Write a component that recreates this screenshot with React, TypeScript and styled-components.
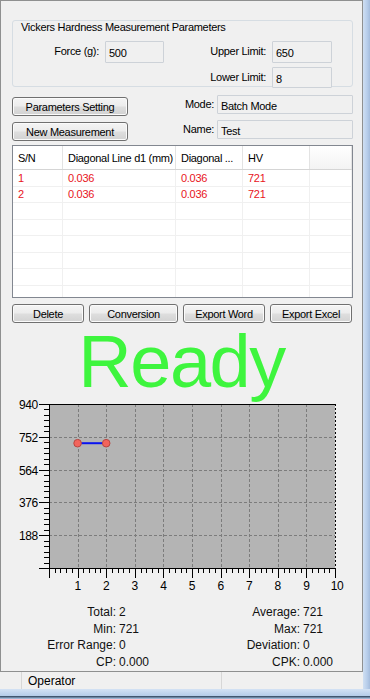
import React from "react";
import styled, { createGlobalStyle } from "styled-components";

const GlobalStyle = createGlobalStyle`
  html, body { margin: 0; padding: 0; }
  body {
    font-family: "Liberation Sans", Arial, sans-serif;
    font-size: 11px;
    color: #000;
    background: #f0f0f0;
  }
  #root { width: 370px; height: 699px; }
`;

const Screen = styled.div`
  width: 370px;
  height: 699px;
  display: flex;
  flex-direction: column;
  overflow: hidden;
  background: #f0f0f0;
`;
const Body = styled.div`
  display: flex;
  flex: 1;
  min-height: 0;
`;
const WindowArea = styled.div`
  width: 363px;
  display: flex;
  flex-direction: column;
`;
const SideFrame = styled.div`
  flex: 1;
  background: linear-gradient(90deg, #cfdff2, #b7cdea 60%, #a4bcdc);
`;
const BottomFrame = styled.div`
  height: 10px;
  background: linear-gradient(#d3e2f4 0%, #b6cde9 65%, #40566f 70%, #40566f 82%, #9db5d3 88%);
`;
const Panel = styled.div`
  flex: 1;
  border: 1px solid #8f9090;
  padding: 0 9px 0 11px;
  display: flex;
  flex-direction: column;
  letter-spacing: -0.3px;
`;

/* parameters group */
const GroupBox = styled.div`
  margin-top: 19px;
  height: 65px;
  border: 1px solid #d6dde3;
  border-radius: 3px;
`;
const GroupTitle = styled.div`
  display: inline-block;
  margin: -8px 0 0 6px;
  padding: 0 2px;
  line-height: 13px;
  background: #f0f0f0;
`;
const FieldGrid = styled.div`
  display: grid;
  grid-template-columns: 86px 59px 96px 60px;
  grid-template-rows: 22px 21px;
  column-gap: 6px;
  row-gap: 4px;
  margin-top: 7px;
`;
const Label = styled.div<{ $col?: number; $row?: number }>`
  grid-column: ${({ $col }) => $col ?? "auto"};
  grid-row: ${({ $row }) => $row ?? "auto"};
  text-align: right;
  align-self: center;
  padding-bottom: 2px;
`;
const TextBox = styled.div<{ $col?: number; $row?: number }>`
  grid-column: ${({ $col }) => $col ?? "auto"};
  grid-row: ${({ $row }) => $row ?? "auto"};
  border: 1px solid #cdd2d8;
  border-radius: 1px;
  background: #f0f0f0;
  display: flex;
  align-items: center;
  padding: 2px 0 0 3px;
  box-sizing: border-box;
`;

/* buttons + mode */
const ControlRow = styled.div`
  display: flex;
  margin-top: 8px;
  height: 46px;
`;
const ButtonColumn = styled.div`
  width: 116px;
  display: flex;
  flex-direction: column;
  gap: 6px;
  padding-top: 2px;
`;
const InfoGrid = styled.div`
  flex: 1;
  display: grid;
  grid-template-columns: 1fr 136px;
  grid-template-rows: 19px 19px;
  column-gap: 3px;
  row-gap: 6px;
`;
const Button = styled.button`
  height: 19px;
  padding: 0;
  border: 1px solid #707070;
  border-radius: 3px;
  background: linear-gradient(#f4f4f4 0%, #ececec 48%, #dedede 52%, #d2d2d2 100%);
  box-shadow: inset 0 0 0 1px #fbfbfb;
  font-family: "Liberation Sans", Arial, sans-serif;
  font-size: 11px;
  letter-spacing: -0.3px;
  color: #000;
`;

/* table */
const Table = styled.div`
  margin-top: 4px;
  height: 153px;
  box-sizing: border-box;
  border: 1px solid #828790;
  background: #fff;
  overflow: hidden;
`;
const TableRow = styled.div<{ $header?: boolean }>`
  display: grid;
  grid-template-columns: 50px 113px 67px 67px 1fr;
  height: ${({ $header }) => ($header ? "24px" : "16.5px")};
  border-bottom: 1px solid ${({ $header }) => ($header ? "#d5d5d5" : "#f0f0f0")};
  box-sizing: border-box;
  color: ${({ $header }) => ($header ? "#000" : "#e8141c")};
`;
const Cell = styled.div<{ $header?: boolean; $blank?: boolean }>`
  display: flex;
  align-items: center;
  padding-left: 5px;
  border-right: 1px solid ${({ $header }) => ($header ? "#e3e3e3" : "#f0f0f0")};
  background: ${({ $header, $blank }) =>
    $header && $blank ? "linear-gradient(#fff, #f3f3f3)" : "transparent"};
  white-space: nowrap;
  overflow: hidden;
`;

const ActionRow = styled.div`
  display: grid;
  grid-template-columns: 72px 89px 82px 82px;
  column-gap: 5px;
  margin-top: 6px;
`;

const Ready = styled.div`
  margin: 4px 0 -3px;
  height: 70px;
  text-align: center;
  font-size: 74px;
  line-height: 70px;
  letter-spacing: -1.5px;
  color: #3ef53e;
  padding-right: 2px;
`;

const ChartBox = styled.div`
  margin-left: -11px;
  height: 210px;
`;

const Stats = styled.div`
  display: grid;
  grid-template-columns: 104px 80px 98px 1fr;
  column-gap: 3px;
  font-size: 12px;
  letter-spacing: 0;
  line-height: 16.7px;
  color: #111;
`;
const StatLabel = styled.div`
  text-align: right;
`;

const StatusBar = styled.div`
  height: 17px;
  display: grid;
  grid-template-columns: 22px 200px 1fr;
  font-size: 12px;
  background: #f0f0f0;
`;
const StatusCell = styled.div`
  border-right: 1px solid #d7d7d7;
  padding-left: 6px;
  display: flex;
  align-items: center;
  &:first-child { padding: 0; }
  &:last-child { border-right: none; }
`;

const headers = ["S/N", "Diagonal Line d1 (mm)", "Diagonal ...", "HV", ""];
const rows = [
  ["1", "0.036", "0.036", "721", ""],
  ["2", "0.036", "0.036", "721", ""],
  ...Array.from({ length: 6 }, () => ["", "", "", "", ""]),
];

const L = 48;
const R = 334;
const T = 10;
const B = 174;
const xAt = (v: number) => L + (v * (R - L)) / 10;
const yAt = (v: number) => B - (v * (B - T)) / 940;

const Chart: React.FC = () => {
  const yTicks = Array.from({ length: 31 }, (_, i) => i);
  const xTicks = Array.from({ length: 51 }, (_, i) => i);
  const points = [1, 2].map((x) => ({ x: xAt(x), y: yAt(721) }));
  return (
    <svg width={363} height={210} style={{ display: "block" }}>
      <rect x={L} y={T} width={R - L} height={B - T} fill="#b4b4b4" />
      {[1, 2, 3, 4, 5, 6, 7, 8, 9].map((i) => (
        <line key={"v" + i} x1={Math.round(xAt(i)) + 0.5} x2={Math.round(xAt(i)) + 0.5} y1={T} y2={B}
          stroke="#7c7c7c" strokeDasharray="3 2" />
      ))}
      {[1, 2, 3, 4].map((i) => {
        const y = Math.round(T + (i * (B - T)) / 5) + 0.5;
        return <line key={"h" + i} x1={L} x2={R} y1={y} y2={y} stroke="#7c7c7c" strokeDasharray="3 2" />;
      })}
      <line x1={L} x2={R} y1={T + 0.5} y2={T + 0.5} stroke="#000" />
      <line x1={L + 0.5} x2={L + 0.5} y1={T} y2={B} stroke="#000" />
      <line x1={L} x2={R + 1} y1={B + 0.5} y2={B + 0.5} stroke="#000" />
      <line x1={R + 0.5} x2={R + 0.5} y1={T} y2={B} stroke="#000" strokeDasharray="2 2" />
      {yTicks.map((i) => {
        const y = Math.round(B - (i * (B - T)) / 30) + 0.5;
        const major = i % 6 === 0;
        return <line key={"yt" + i} x1={major ? 38 : 43} x2={L} y1={y} y2={y} stroke="#000" />;
      })}
      {xTicks.map((i) => {
        const x = Math.round(L + (i * (R - L)) / 50) + 0.5;
        const major = i % 5 === 0;
        return <line key={"xt" + i} x1={x} x2={x} y1={B} y2={major ? B + 10 : B + 5} stroke="#000" />;
      })}
      {[940, 752, 564, 376, 188].map((v, i) => (
        <text key={v} x={37} y={Math.round(T + (i * (B - T)) / 5) + 1} textAnchor="end" dominantBaseline="central"
          fontFamily="Liberation Sans, Arial, sans-serif" fontSize={12} fill="#000">
          {v}
        </text>
      ))}
      {[1, 2, 3, 4, 5, 6, 7, 8, 9, 10].map((v) => (
        <text key={v} x={xAt(v) + (v === 10 ? 2 : 0)} y={192} textAnchor="middle" dominantBaseline="central"
          fontFamily="Liberation Sans, Arial, sans-serif" fontSize={12} fill="#000">
          {v}
        </text>
      ))}
      <line x1={points[0].x} x2={points[1].x} y1={points[0].y + 1} y2={points[1].y + 1} stroke="#0a14f0" strokeWidth={2} />
      {points.map((p, i) => (
        <circle key={i} cx={p.x} cy={p.y + 1} r={3.8} fill="#f2645c" stroke="#b84640" strokeWidth={1} />
      ))}
    </svg>
  );
};

const App: React.FC = () => {
  return (
    <Screen>
      <GlobalStyle />
      <Body>
        <WindowArea>
          <Panel>
            <GroupBox>
              <GroupTitle>Vickers Hardness Measurement Parameters</GroupTitle>
              <FieldGrid>
                <Label $col={1} $row={1}>Force (g):</Label>
                <TextBox $col={2} $row={1}>500</TextBox>
                <Label $col={3} $row={1}>Upper Limit:</Label>
                <TextBox $col={4} $row={1}>650</TextBox>
                <Label $col={3} $row={2}>Lower Limit:</Label>
                <TextBox $col={4} $row={2}>8</TextBox>
              </FieldGrid>
            </GroupBox>

            <ControlRow>
              <ButtonColumn>
                <Button>Parameters Setting</Button>
                <Button>New Measurement</Button>
              </ButtonColumn>
              <InfoGrid>
                <Label>Mode:</Label>
                <TextBox>Batch Mode</TextBox>
                <Label>Name:</Label>
                <TextBox>Test</TextBox>
              </InfoGrid>
            </ControlRow>

            <Table>
              <TableRow $header>
                {headers.map((h, i) => (
                  <Cell key={i} $header $blank={h === ""}>{h}</Cell>
                ))}
              </TableRow>
              {rows.map((r, i) => (
                <TableRow key={i}>
                  {r.map((c, j) => (
                    <Cell key={j}>{c}</Cell>
                  ))}
                </TableRow>
              ))}
            </Table>

            <ActionRow>
              <Button>Delete</Button>
              <Button>Conversion</Button>
              <Button>Export Word</Button>
              <Button>Export Excel</Button>
            </ActionRow>

            <Ready>Ready</Ready>

            <ChartBox>
              <Chart />
            </ChartBox>

            <Stats>
              <StatLabel>Total:</StatLabel>
              <div>2</div>
              <StatLabel>Average:</StatLabel>
              <div>721</div>
              <StatLabel>Min:</StatLabel>
              <div>721</div>
              <StatLabel>Max:</StatLabel>
              <div>721</div>
              <StatLabel>Error Range:</StatLabel>
              <div>0</div>
              <StatLabel>Deviation:</StatLabel>
              <div>0</div>
              <StatLabel>CP:</StatLabel>
              <div>0.000</div>
              <StatLabel>CPK:</StatLabel>
              <div>0.000</div>
            </Stats>
          </Panel>
          <StatusBar>
            <StatusCell />
            <StatusCell>Operator</StatusCell>
            <StatusCell />
          </StatusBar>
        </WindowArea>
        <SideFrame />
      </Body>
      <BottomFrame />
    </Screen>
  );
};

export default App;
